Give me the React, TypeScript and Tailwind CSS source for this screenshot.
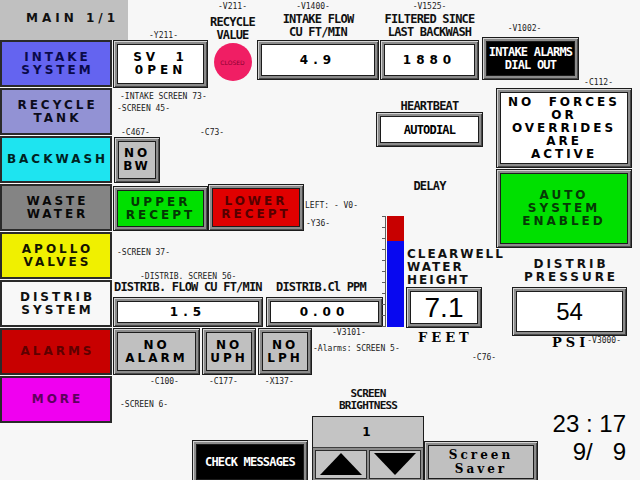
import React from 'react';

// shared type styles (HMI pixel fonts approximated)
const bfont = "font-['DejaVu_Sans',sans-serif] font-bold text-[12px]";
const block = `${bfont} leading-[13px] tracking-[3px]`;
const sfont = "font-['DejaVu_Serif',serif] font-bold";
const mono = "font-['DejaVu_Sans_Mono',monospace] font-bold tracking-[-0.8px]";
const digits = "font-['Liberation_Sans',Arial,sans-serif]";

const nav = [
  { lines: ['INTAKE', 'SYSTEM'], cls: 'bg-[#6464f0] text-[#0a0a4a]' },
  { lines: ['RECYCLE', 'TANK'], cls: 'bg-[#9292d4] text-[#0c0c1c]' },
  { lines: ['BACKWASH'], cls: 'bg-[#1ee4f0] text-[#002222]' },
  { lines: ['WASTE', 'WATER'], cls: 'bg-[#848484] text-[#080808]' },
  { lines: ['APOLLO', 'VALVES'], cls: 'bg-[#f0f000] text-[#141400]' },
  { lines: ['DISTRIB', 'SYSTEM'], cls: 'bg-[#f8f8f8] text-[#101010]' },
  { lines: ['ALARMS'], cls: 'bg-[#c80000] text-[#5e0000]' },
  { lines: ['MORE'], cls: 'bg-[#f000f0] text-[#5e005e]' },
];

function Tag({
  className = '',
  lead = 'leading-[9px]',
  children,
}: {
  className?: string;
  lead?: string;
  children: React.ReactNode;
}) {
  return (
    <div className={`whitespace-pre font-['DejaVu_Sans_Mono',monospace] text-[8px] text-[#222] ${lead} ${className}`}>
      {children}
    </div>
  );
}

function Label({
  className = '',
  size = 'text-[12px] leading-[13px]',
  children,
}: {
  className?: string;
  size?: string;
  children: React.ReactNode;
}) {
  return <div className={`whitespace-nowrap text-[#111] ${mono} ${size} ${className}`}>{children}</div>;
}

// beveled HMI object frame
function Frame({
  className = '',
  inner = 'bg-white',
  children,
}: {
  className?: string;
  inner?: string;
  children?: React.ReactNode;
}) {
  return (
    <div className={`flex shrink-0 border border-[#1c1c1c] bg-[#8c8c8c] p-[3px] shadow-[inset_1px_1px_0_#d4d4d4,inset_-1px_-1px_0_#4a4a4a] ${className}`}>
      <div className={`flex flex-1 flex-col items-center justify-center border border-[#1c1c1c] text-center ${inner}`}>
        {children}
      </div>
    </div>
  );
}

function Lines({ items, className = block }: { items: string[]; className?: string }) {
  return (
    <>
      {items.map((t) => (
        <span key={t} className={`whitespace-pre ${className}`}>
          {t}
        </span>
      ))}
    </>
  );
}

export default function App() {
  return (
    <div className="relative h-[480px] w-[640px] overflow-hidden bg-[#f7f7f7] text-black">
      {/* left column: title + screen navigation */}
      <div className="flex flex-col">
        <div className={`flex h-[40px] w-[128px] items-center bg-[#c0c0c0] pb-[4px] pl-[26px] text-[#111] ${bfont} leading-[13px] tracking-[4px]`}>
          MAIN 1/1
        </div>
        <div className="flex w-[112px] flex-col gap-[1px]">
          {nav.map((b) => (
            <div
              key={b.lines.join(' ')}
              className={`flex h-[47px] flex-col items-center justify-center border-2 border-[#2a2a2a] pl-[3px] text-center ${block} ${b.cls}`}
            >
              {b.lines.map((l) => (
                <span key={l}>{l}</span>
              ))}
            </div>
          ))}
        </div>
      </div>

      {/* HMI canvas: top strip of objects */}
      <div className="absolute left-[113px] top-0 flex items-start">
        <div className="flex w-[95px] flex-col items-center pt-[31px]">
          <Tag className="pl-[6px]">-Y211-</Tag>
          <Frame className="h-[48px] w-[95px]">
            <Lines items={['SV  1', '0PEN']} className={`${bfont} leading-[13px] tracking-[4px]`} />
          </Frame>
        </div>
        <div className="flex w-[49px] flex-col items-center pt-[2px]">
          <Tag>-V211-</Tag>
          <Label className="mt-[5px] text-center">
            RECYCLE
            <br />
            VALUE
          </Label>
          <div className="mt-[1px] flex h-[38px] w-[38px] items-center justify-center rounded-full bg-[#f01e64]">
            <span className="font-['DejaVu_Sans',sans-serif] text-[6px] text-[#8a0030]">CLOSED</span>
          </div>
        </div>
        <div className="flex w-[122px] flex-col items-center pt-[2px]">
          <Tag className="pr-[10px]">-V1400-</Tag>
          <Label className="mt-[2px] text-center">
            INTAKE FLOW
            <br />
            CU FT/MIN
          </Label>
          <Frame className="mt-[1px] h-[40px] w-[122px]">
            <span className={`${bfont} leading-[13px] tracking-[5px]`}>4.9</span>
          </Frame>
        </div>
        <div className="ml-[1px] flex w-[99px] flex-col items-center pt-[2px]">
          <Tag>-V1525-</Tag>
          <Label className="mt-[2px] text-center">
            FILTERED SINCE
            <br />
            LAST BACKWASH
          </Label>
          <Frame className="mt-[1px] h-[40px] w-[99px]">
            <span className={`${bfont} leading-[13px] tracking-[5px]`}>1880</span>
          </Frame>
        </div>
        <div className="ml-[3px] flex w-[97px] flex-col items-center pt-[24px]">
          <Tag className="pr-[12px]">-V1002-</Tag>
          <Frame className="mt-[4px] h-[43px] w-[97px]" inner="bg-black">
            <span className={`text-[12px] leading-[13px] text-white ${mono}`}>
              INTAKE ALARMS
              <br />
              DIAL OUT
            </span>
          </Frame>
        </div>
      </div>

      {/* status panels, right */}
      <div className="absolute left-[496px] top-[79px] flex w-[136px] flex-col gap-[1px]">
        <Tag className="mr-[19px] self-end" lead="leading-[8px]">-C112-</Tag>
        <Frame className="h-[80px]">
          <Lines items={['NO  FORCES', 'OR', 'OVERRIDES', 'ARE', 'ACTIVE']} />
        </Frame>
        <Frame className="h-[79px]" inner="bg-[#00e000] text-[#063a06]">
          <Lines items={['AUTO', 'SYSTEM', 'ENABLED']} />
        </Frame>
      </div>

      {/* heartbeat */}
      <div className="absolute left-[376px] top-[101px] flex w-[107px] flex-col items-center">
        <Label size="text-[12px] leading-[11px]">HEARTBEAT</Label>
        <Frame className="h-[35px] w-[107px]">
          <span className={`text-[12px] ${mono}`}>AUTODIAL</span>
        </Frame>
        <Label className="mt-[33px]">DELAY</Label>
      </div>

      {/* middle-left objects */}
      <div className="absolute left-[113px] top-[92px] flex flex-col">
        <Tag className="pl-[7px]">-INTAKE SCREEN 73-</Tag>
        <Tag className="mt-[3px] pl-[4px]">-SCREEN 45-</Tag>
        <div className="mt-[15px] flex">
          <Tag className="w-[87px] pl-[8px]">-C467-</Tag>
          <Tag>-C73-</Tag>
        </div>
        <Frame className="ml-[1px] h-[46px] w-[46px]" inner="bg-[#c0c0c0]">
          <Lines items={['NO', 'BW']} />
        </Frame>
        <div className="mt-[1px] flex items-start">
          <Frame className="mt-[2px] h-[45px] w-[95px]" inner="bg-[#00e000] text-[#043804]">
            <Lines items={['UPPER', 'RECEPT']} />
          </Frame>
          <Frame className="h-[47px] w-[96px]" inner="bg-[#e00000] text-[#560000]">
            <Lines items={['LOWER', 'RECEPT']} />
          </Frame>
          <div className="ml-[1px] flex flex-col pt-[17px]">
            <Tag>LEFT: - V0-</Tag>
            <Tag className="mt-[9px] pl-[1px]">-Y36-</Tag>
          </div>
        </div>
        <Tag className="mt-[17px] pl-[4px]">-SCREEN 37-</Tag>
        <Tag className="mt-[15px] pl-[27px]">-DISTRIB. SCREEN 56-</Tag>
        <div className="flex">
          <Label className="w-[163px] pl-[1px]">DISTRIB. FLOW CU FT/MIN</Label>
          <Label>DISTRIB.Cl PPM</Label>
        </div>
        <div className="mt-[3px] flex gap-[3px]">
          <Frame className="h-[30px] w-[150px]">
            <span className={`${bfont} leading-[13px] tracking-[5px]`}>1.5</span>
          </Frame>
          <Frame className="h-[30px] w-[117px]">
            <span className={`${bfont} leading-[13px] tracking-[5px]`}>0.00</span>
          </Frame>
        </div>
        <div className="mt-[1px] flex items-start gap-[2px]">
          <Frame className="h-[47px] w-[87px]" inner="bg-[#c0c0c0]">
            <Lines items={['NO', 'ALARM']} />
          </Frame>
          <Frame className="h-[47px] w-[54px]" inner="bg-[#c0c0c0]">
            <Lines items={['NO', 'UPH']} />
          </Frame>
          <Frame className="h-[47px] w-[54px]" inner="bg-[#c0c0c0]">
            <Lines items={['NO', 'LPH']} />
          </Frame>
          <div className="-ml-[1px] flex flex-col">
            <Tag className="pl-[19px]">-V3101-</Tag>
            <Tag className="mt-[7px]">-Alarms: SCREEN 5-</Tag>
          </div>
        </div>
        <div className="mt-[2px] flex">
          <Tag className="ml-[37px]">-C100-</Tag>
          <Tag className="ml-[30px]">-C177-</Tag>
          <Tag className="ml-[27px]">-X137-</Tag>
        </div>
        <Tag className="mt-[14px] pl-[7px]">-SCREEN 6-</Tag>
      </div>

      {/* clearwell level */}
      <div className="absolute left-[381px] top-[215px] flex items-start">
        <svg width="24" height="113" viewBox="0 0 24 113">
          <line x1="4.5" y1="1" x2="4.5" y2="112" stroke="#606060" />
          {[1, 12, 23, 34, 45, 56, 67, 78, 89, 100, 111].map((y) => (
            <line key={y} x1="1" y1={y + 0.5} x2="4.5" y2={y + 0.5} stroke="#606060" />
          ))}
          <rect x="6" y="1" width="17" height="25" fill="#c80000" />
          <rect x="6" y="26" width="17" height="86" fill="#0808f0" />
        </svg>
        <div className="ml-[2px] flex flex-col pt-[33px]">
          <div className={`text-[#111] ${bfont} leading-[13px] tracking-[2px]`}>
            CLEARWELL
            <br />
            WATER
            <br />
            HEIGHT
          </div>
          <Frame className="-ml-[1px] h-[41px] w-[76px]">
            <span className={`${digits} text-[28px] leading-[28px]`}>7.1</span>
          </Frame>
          <div className={`ml-[11px] mt-[3px] text-[13px] leading-[13px] tracking-[4px] ${sfont}`}>FEET</div>
        </div>
      </div>
      <Tag className="absolute left-[472px] top-[353px]">-C76-</Tag>

      {/* distribution pressure */}
      <div className="absolute left-[512px] top-[258px] flex w-[115px] flex-col">
        <div className={`pl-[3px] text-center text-[#111] ${block}`}>
          DISTRIB
          <br />
          PRESSURE
        </div>
        <Frame className="mt-[3px] h-[49px]">
          <span className={`${digits} text-[24px] leading-[24px]`}>54</span>
        </Frame>
        <div className="flex items-start pl-[40px]">
          <span className={`text-[13px] leading-[13px] tracking-[4px] ${sfont}`}>PSI</span>
          <Tag className="-ml-[2px]">-V3000-</Tag>
        </div>
      </div>

      {/* bottom row */}
      <div className="absolute left-[192px] top-[388px] flex items-start">
        <Frame className="mt-[52px] h-[44px] w-[116px]" inner="bg-black">
          <span className={`text-[12px] text-white ${mono}`}>CHECK MESSAGES</span>
        </Frame>
        <div className="ml-[4px] flex w-[112px] flex-col items-center">
          <Label className="text-center" size="text-[11px] leading-[12px]">
            SCREEN
            <br />
            BRIGHTNESS
          </Label>
          <div className="mt-[4px] flex h-[66px] w-[112px] flex-col border border-[#1c1c1c] bg-[#8c8c8c]">
            <div className={`flex h-[31px] items-center justify-center border-b border-[#404040] bg-[#c4c4c4] ${block}`}>1</div>
            <div className="flex flex-1 gap-[2px] p-[2px]">
              <div className="flex flex-1 justify-center border border-[#2c2c2c] bg-[#c4c4c4] pt-[2px]">
                <svg width="42" height="22" viewBox="0 0 42 22">
                  <polygon points="21,0 42,22 0,22" fill="#000" />
                </svg>
              </div>
              <div className="flex flex-1 justify-center border border-[#2c2c2c] bg-[#c4c4c4] pt-[2px]">
                <svg width="42" height="22" viewBox="0 0 42 22">
                  <polygon points="0,0 42,0 21,22" fill="#000" />
                </svg>
              </div>
            </div>
          </div>
        </div>
        <Frame className="mt-[53px] h-[42px] w-[114px]" inner="bg-[#c0c0c0]">
          <Lines items={['Screen', 'Saver']} className={`text-[12px] leading-[14px] tracking-[3px] ${sfont}`} />
        </Frame>
        <div className={`ml-[2px] mt-[24px] flex w-[86px] flex-col items-end gap-[4px] text-[24px] leading-[24px] ${digits}`}>
          <span className="whitespace-pre">{'23 : 17'}</span>
          <span className="whitespace-pre">{'9/   9'}</span>
        </div>
      </div>
    </div>
  );
}
